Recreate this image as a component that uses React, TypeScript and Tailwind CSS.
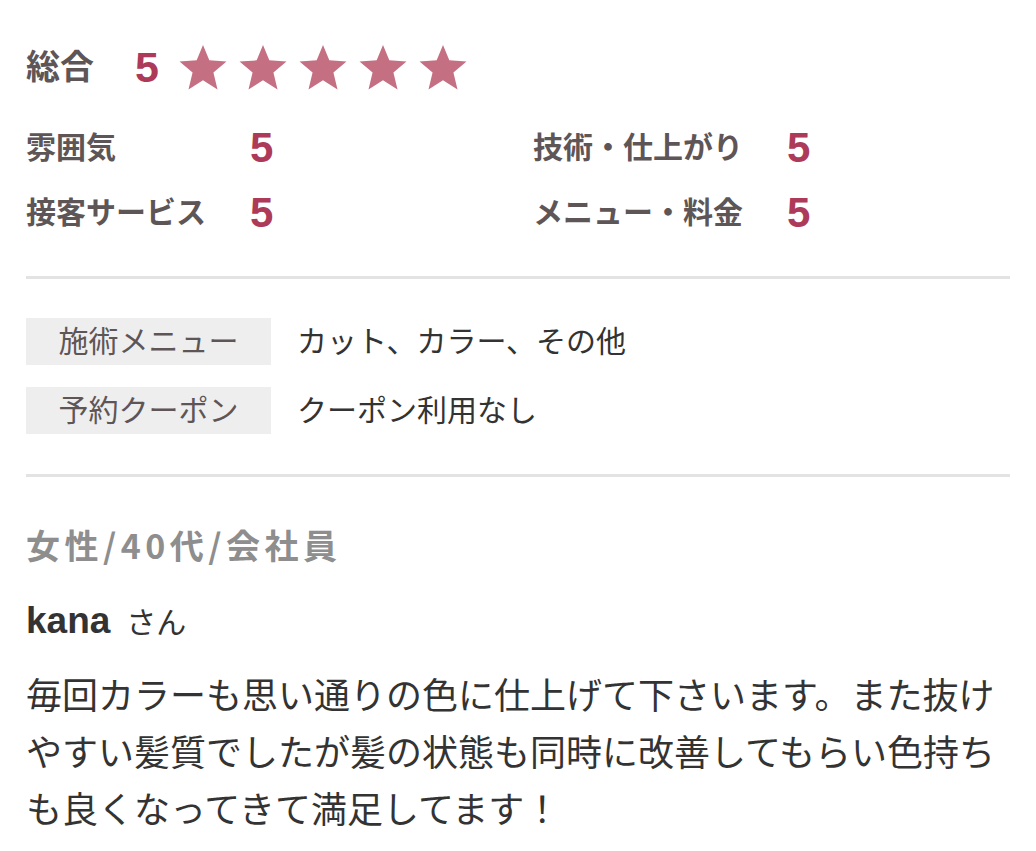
const font = { fontFamily: '"Liberation Sans", "Noto Sans CJK JP", sans-serif' };
const cjk = { fontFamily: '"Noto Sans CJK JP", sans-serif' };

function Star() {
  return (
    <svg viewBox="0 0 24 23" className="h-[47px] w-[52px]" aria-hidden="true">
      <polygon
        points="12,0.5 15.1,8 23.5,8.6 17.1,14 19.1,22.3 12,17.8 4.9,22.3 6.9,14 0.5,8.6 8.9,8"
        fill="#c56f83"
      />
    </svg>
  );
}

function Score({ label, value, labelWidth }: { label: string; value: string; labelWidth: string }) {
  return (
    <div className="flex h-[65px] items-center">
      <span className={`${labelWidth} text-[30px] font-bold text-[#5e5557]`}>{label}</span>
      <span className="text-[42px] leading-none font-bold text-[#ad3a58]">{value}</span>
    </div>
  );
}

function InfoRow({ label, value }: { label: string; value: string }) {
  return (
    <div className="flex items-center">
      <div className="flex h-[47px] w-[245px] items-center justify-center bg-[#eeeeee] text-[30px] text-[#5e5557]">
        {label}
      </div>
      <div className="ml-[26px] text-[30px] text-[#333333]">{value}</div>
    </div>
  );
}

export default function App() {
  return (
    <div className="min-h-screen bg-white px-[26px] pt-[42px] pb-6" style={font}>
      <div className="flex h-[50px] items-center">
        <span className="text-[34px] font-bold text-[#5e5557]">総合</span>
        <span className="ml-[41px] text-[43px] leading-none font-bold text-[#ad3a58]">5</span>
        <div className="ml-[18px] flex gap-[8px]">
          <Star />
          <Star />
          <Star />
          <Star />
          <Star />
        </div>
      </div>

      <div className="mt-[23px] flex">
        <div className="w-[507px]">
          <Score label="雰囲気" value="5" labelWidth="w-[224px]" />
          <Score label="接客サービス" value="5" labelWidth="w-[224px]" />
        </div>
        <div>
          <Score label="技術・仕上がり" value="5" labelWidth="w-[254px]" />
          <Score label="メニュー・料金" value="5" labelWidth="w-[254px]" />
        </div>
      </div>

      <div className="mt-[31px] h-[3px] bg-[#e3e3e3]" />

      <div className="mt-[39px] flex flex-col gap-[22px]">
        <InfoRow label="施術メニュー" value="カット、カラー、その他" />
        <InfoRow label="予約クーポン" value="クーポン利用なし" />
      </div>

      <div className="mt-[40px] h-[3px] bg-[#e3e3e3]" />

      <div className="mt-[42px] text-[34px] leading-[51px] font-bold tracking-[4.5px] text-[#8e8e8e]" style={cjk}>
        女性/40代/会社員
      </div>

      <div className="mt-[26px] flex items-baseline leading-[50px]">
        <span className="text-[37px] font-bold text-[#333333]">kana</span>
        <span className="ml-[16px] text-[30px] text-[#333333]">さん</span>
      </div>

      <p className="mt-[20px] text-[36px] leading-[57px] text-[#333333]">
        毎回カラーも思い通りの色に仕上げて下さいます。また抜けやすい髪質でしたが髪の状態も同時に改善してもらい色持ちも良くなってきて満足してます！
      </p>
    </div>
  );
}
